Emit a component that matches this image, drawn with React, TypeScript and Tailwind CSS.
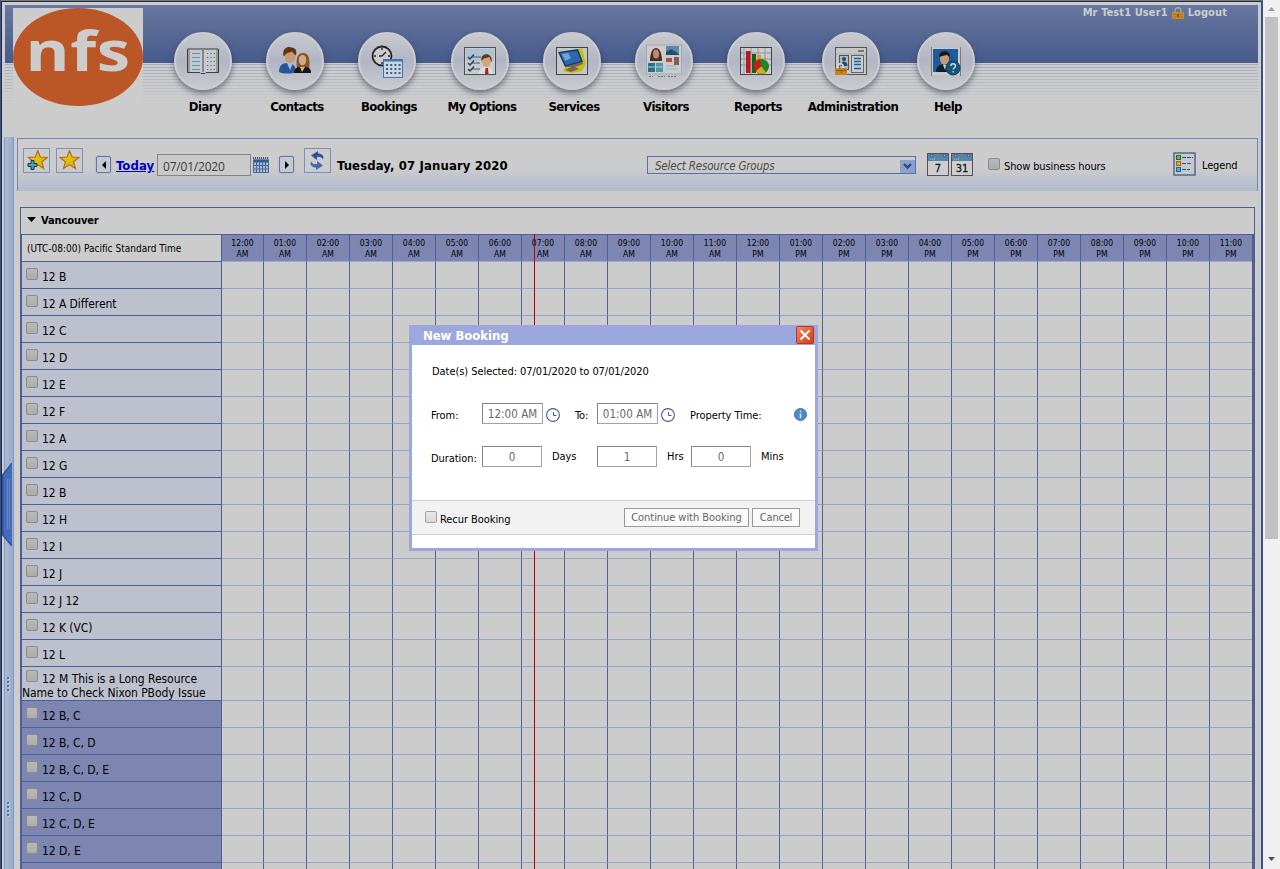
import React from "react";

const HOURS = Array.from({ length: 24 }, (_, h) => ({
  time: `${String(h % 12 === 0 ? 12 : h % 12).padStart(2, "0")}:00`,
  half: h < 12 ? "AM" : "PM",
}));

const ROOMS = ["12 B", "12 A Different", "12 C", "12 D", "12 E", "12 F", "12 A", "12 G", "12 B", "12 H", "12 I", "12 J", "12 J 12", "12 K (VC)", "12 L"];
const COMBINED = ["12 B, C", "12 B, C, D", "12 B, C, D, E", "12 C, D", "12 C, D, E", "12 D, E", ""];

function DiaryIcon() {
  return (
    <svg width="34" height="28" viewBox="0 0 34 28">
      <path d="M1.5 2h31v23.5H20l-1 1h-4l-1-1H1.500z" fill="#c6c8cb" stroke="#3d3d3d" />
      <path d="M3 3v22M31 3v22" stroke="#999" strokeWidth="2" />
      <path d="M17 3v22" stroke="#888" strokeWidth="2" />
      <path d="M6 6.500h8M6 10.500h8M6 14.500h8M6 18.500h8M6 22.500h8" stroke="#4d9bb8" strokeWidth="1" />
      <path d="M21 6.500h9M21 10.500h9M21 14.500h9M21 18.500h9M21 22.500h9" stroke="#2f7ca5" strokeWidth="1.200" strokeDasharray="1.200 2.200" />
    </svg>
  );
}
function ContactsIcon() {
  return (
    <svg width="34" height="28" viewBox="0 0 34 28">
      <path d="M1 25c0-6 3-9 8-9 6 0 9 3 9 9-4 2-13 2-17 0z" fill="#28559a" />
      <path d="M9 16l3 7 3-7z" fill="#a9bde0" />
      <ellipse cx="12" cy="9.500" rx="5.500" ry="6.500" fill="#c99a78" />
      <path d="M5.500 9C4 2 9-1 13 .5c5 0 6 4 5 8-2-1-3-3-4-4-2 1-6 1-7 4z" fill="#5f3510" />
      <path d="M19 22c-1-8-1-16 6-16s7 8 6 16z" fill="#86561a" />
      <ellipse cx="24.500" cy="13" rx="3.800" ry="5.200" fill="#d0a78a" />
      <path d="M16 26c0-4 3-6 6-6l2 3 3-3c4 0 6 2 6 6z" fill="#161616" />
      <path d="M22 20l2 5 3-5z" fill="#d3b09a" />
    </svg>
  );
}
function BookingsIcon() {
  return (
    <svg width="34" height="34" viewBox="0 0 34 34">
      <circle cx="12" cy="12" r="9.500" fill="#ccc" stroke="#222" strokeWidth="1.800" />
      <path d="M12 4v2M12 18v2M4 12h2M18 12h2M12 12l4-4M12 12h-3" stroke="#222" strokeWidth="1.300" />
      <rect x="13.500" y="15.500" width="19" height="18" fill="#cfd3d8" stroke="#3d76b3" />
      <path d="M13 16.500h20" stroke="#3d76b3" strokeWidth="2" />
      <path d="M16 21h15M16 25h15M16 29h15" stroke="#28669f" strokeWidth="2" strokeDasharray="2 2.200" />
    </svg>
  );
}
function OptionsIcon() {
  return (
    <svg width="32" height="28" viewBox="0 0 32 28">
      <rect x=".5" y=".5" width="31" height="27" fill="#c8cbcf" stroke="#505050" />
      <rect x="2" y="2" width="28" height="12" fill="#adc2d2" />
      <path d="M8 10h9M8 16h8M8 22h8" stroke="#555" />
      <path d="M4 10l2 2 4-4.500M4 16l2 2 4-4.500M4 22l2 2 4-4.500" fill="none" stroke="#1c4670" strokeWidth="1.500" />
      <path d="M15 27c0-5 3-7 7-7s7 2 7 7z" fill="#ddd" />
      <path d="M21.500 21h2.500l.5 6h-3.500z" fill="#b02020" />
      <ellipse cx="22.500" cy="14" rx="4.500" ry="6" fill="#d3a57f" />
      <path d="M17.500 14c-2-9 12-9 10 1-1-1-1-3-2-5-2 1-5 0-8 4z" fill="#653719" />
    </svg>
  );
}
function ServicesIcon() {
  return (
    <svg width="32" height="28" viewBox="0 0 32 28">
      <rect x=".5" y=".5" width="31" height="27" fill="#c7c7c7" stroke="#444" />
      <path d="M22 2l4-1 4 15-4 8-10 2-9-2 3-6z" fill="#c5bd13" />
      <path d="M2 5l20-3 5 13-18 5z" fill="#153c6f" />
      <path d="M4 6l17-2 4 10-15 4z" fill="#2c67b2" />
      <path d="M6 7l6-1 3 5-6 3z" fill="#70a3d4" />
      <path d="M8 20l18-5 1 2-8 3 4 2-8 3-6-2 6-3z" fill="#756556" />
    </svg>
  );
}
function VisitorsIcon() {
  return (
    <svg width="36" height="36" viewBox="0 0 36 36">
      <rect x=".5" y="2" width="35" height="29" fill="#c5cdd0" stroke="#aaa" />
      <rect x="2" y="3" width="16" height="16" fill="#d4c9c2" />
      <path d="M4 18c0-4 1-13 6-13s6 9 6 13z" fill="#4a2b25" />
      <ellipse cx="10" cy="11" rx="3" ry="4.500" fill="#bd8b76" />
      <rect x="2" y="20" width="7" height="9" fill="#22718a" />
      <rect x="10" y="20" width="7" height="9" fill="#4998a6" />
      <path d="M2 24h15" stroke="#b9cccc" />
      <rect x="20" y="3" width="13" height="9" fill="#5d8aaa" />
      <path d="M20 9l5-3 8 5v1H20z" fill="#254c6b" />
      <rect x="20" y="15" width="6" height="4" fill="#b04e42" />
      <rect x="28" y="14" width="5" height="8" fill="#8d5a53" />
      <path d="M20 23h10M20 26h12" stroke="#a4adb1" />
      <path d="M3 33.500h4M12 33.500h7M22 33.500h8" stroke="#777" strokeDasharray="2 1" />
    </svg>
  );
}
function ReportsIcon() {
  return (
    <svg width="32" height="28" viewBox="0 0 32 28">
      <rect x=".5" y=".5" width="31" height="27" fill="#ccc" stroke="#444" />
      <path d="M4 1v26M11 1v26M18 1v26M25 1v26M1 6h30M1 12h30M1 18h30" stroke="#8c97a7" />
      <rect x="6" y="4" width="4.500" height="22" fill="#bd1717" />
      <rect x="12" y="7" width="4" height="19" fill="#12631c" />
      <rect x="17" y="8" width="4" height="8" fill="#e29c16" />
      <circle cx="21.500" cy="19.500" r="7.500" fill="#1e8620" />
      <path d="M21.500 19.500L15.500 24a7.500 7.500 0 0 1 4-12z" fill="#c71b1b" />
      <path d="M21.500 19.500L26 25.500a7.500 7.500 0 0 1-10-1.500z" fill="#dfa51c" />
    </svg>
  );
}
function AdminIcon() {
  return (
    <svg width="32" height="28" viewBox="0 0 32 28">
      <rect x=".5" y=".5" width="31" height="27" fill="#c7c7c7" stroke="#555" />
      <path d="M23 4h6" stroke="#777" strokeWidth="2" />
      <path d="M1 7h30" stroke="#aaa" />
      <rect x="4.500" y="8.500" width="9" height="14" fill="#aabac7" stroke="#555" />
      <circle cx="9" cy="12" r="2" fill="#28496b" />
      <path d="M5.500 19c0-6 7-6 7 0z" fill="#28496b" />
      <rect x="16.500" y="8.500" width="12" height="17" fill="#c9cdd2" stroke="#666" />
      <path d="M19 11.500h7M19 14.500h7M19 17.500h7M19 21.500h7" stroke="#245d98" strokeWidth="1.300" />
      <path d="M3 22v-3c0-3 5-3 5 0v3" fill="none" stroke="#ddd" strokeWidth="1.500" />
      <rect x="0" y="21" width="12" height="7" fill="#cb8418" />
      <path d="M1 23.500h10M6 24v2" stroke="#8b5407" />
    </svg>
  );
}
function HelpIcon() {
  return (
    <svg width="32" height="29" viewBox="0 0 32 29">
      <rect x="1" y="1" width="30" height="27" fill="#c9c9c9" />
      <path d="M1.500 0v29M30.500 0v29" stroke="#847a72" />
      <rect x="3" y="2" width="25" height="23" fill="#1d5b9b" />
      <path d="M6 25c0-6 4-8 9-8s8 3 8 8z" fill="#121c2b" />
      <ellipse cx="14.500" cy="12" rx="4.500" ry="6" fill="#c69a76" />
      <path d="M9 10c0-7 11-8 11 0l-3-2-5 1z" fill="#1b1814" />
      <path d="M13 18l2 5 2-5z" fill="#ccc" />
      <circle cx="23" cy="21" r="7" fill="#12577e" stroke="#073e61" />
      <path d="M20.800 19c0-3 4.700-3 4.700 0 0 1.700-2.300 1.700-2.300 3.500M23.200 24v1.500" fill="none" stroke="#d0dce4" strokeWidth="1.400" />
    </svg>
  );
}

const NAV = [
  { label: "Diary", icon: <DiaryIcon />, box: "w-[92px]" },
  { label: "Contacts", icon: <ContactsIcon />, box: "w-[92px]" },
  { label: "Bookings", icon: <BookingsIcon />, box: "w-[92px]" },
  { label: "My Options", icon: <OptionsIcon />, box: "w-[94px]" },
  { label: "Services", icon: <ServicesIcon />, box: "w-[90px]" },
  { label: "Visitors", icon: <VisitorsIcon />, box: "w-[94px]" },
  { label: "Reports", icon: <ReportsIcon />, box: "w-[90px]" },
  { label: "Administration", icon: <AdminIcon />, box: "w-[100px]" },
  { label: "Help", icon: <HelpIcon />, box: "w-[90px]" },
];

function Check({ className = "" }: { className?: string }) {
  return <span className={`inline-block h-[12px] w-[12px] shrink-0 rounded-[2px] border border-[#8b8b8b] bg-linear-to-b from-[#b9b9b9] to-[#acacac] ${className}`} />;
}

function Padlock() {
  return (
    <svg width="12" height="12" viewBox="0 0 12 12" className="mx-[4px]">
      <path d="M3 6V3c0-3 6-3 6 0v3" fill="none" stroke="#9cacae" strokeWidth="1.300" />
      <rect x="0" y="5" width="12" height="7" rx="1" fill="#c98a25" />
      <path d="M1 7.500h10M1 10h10" stroke="#a96b12" strokeWidth=".7" />
      <path d="M6 7.500v2" stroke="#4b2e05" strokeWidth="1.300" />
    </svg>
  );
}

function Star({ plus }: { plus?: boolean }) {
  return (
    <span className="flex h-[25px] w-[27px] items-center justify-center border border-[#7b8fc0]">
      <svg width="23" height="21" viewBox="0 0 23 21">
        <defs>
          <linearGradient id="gold" x1="0" y1="0" x2="1" y2="1">
            <stop offset="0" stopColor="#d8b653" />
            <stop offset=".5" stopColor="#d9c409" />
            <stop offset="1" stopColor="#d39a10" />
          </linearGradient>
        </defs>
        <g transform={plus ? "translate(2.300 -0.500)" : "translate(1 -0.500)"}>
          <path d="M10.500 1l2.500 6.500 7 .5-5.500 4.500 2 6.500-6-3.700L4.500 19l2-6.500L1 8l7-.5z" fill="url(#gold)" stroke="#b9671b" strokeWidth="1.100" />
        </g>
        {plus && <path d="M6 10.500h3v3h3v3H9v3H6v-3H3v-3h3z" fill="#4b9fbd" stroke="#173948" />}
      </svg>
    </span>
  );
}

function Arrow({ left }: { left?: boolean }) {
  return (
    <span className="flex h-[17px] w-[15px] items-center justify-center rounded-[2px] border border-[#6078ad] bg-[#c6c8cf] shadow-[0_0_2px_#8fa3cc]">
      <svg width="4" height="8" viewBox="0 0 4 8">
        <path d={left ? "M4 0v8L0 4z" : "M0 0v8l4-4z"} fill="#000" />
      </svg>
    </span>
  );
}

function CalendarPage({ day }: { day: string }) {
  return (
    <span className="mr-[2px] flex h-[23px] w-[22px] flex-col border border-[#5a4f52] bg-[#cdcdcd]">
      <svg width="20" height="7" viewBox="0 0 20 7" className="shrink-0">
        <rect width="20" height="7" fill="#5585ab" />
        <circle cx="3.500" cy="1.500" r="1.300" fill="#9fb5c4" stroke="#2c4a60" strokeWidth=".8" />
        <circle cx="16.500" cy="1.500" r="1.300" fill="#9fb5c4" stroke="#2c4a60" strokeWidth=".8" />
        <path d="M2 5h5" stroke="#bcd" strokeDasharray="1 1" />
      </svg>
      <span className="pt-px text-center text-[11px] leading-[13px] text-[#101c1c] [-webkit-text-stroke:0.3px_#101c1c]">{day}</span>
    </span>
  );
}

function Header() {
  return (
    <header className="mx-[3px] mt-[3px] flex h-[132px] bg-[linear-gradient(180deg,#68779f_0px,#465a8c_58px,transparent_58px)]">
      <div className="flex w-full bg-[linear-gradient(180deg,transparent_58px,rgba(204,204,204,0)_58px,#ccc_102px),repeating-linear-gradient(180deg,transparent_0px,transparent_1px,#a3abc2_1px,#a3abc2_2px,transparent_2px,transparent_3px)] bg-[position:0_0,0_58px] bg-[size:100%_132px,100%_44px] bg-no-repeat">
        <div className="ml-[8px] mt-[3px] flex h-[98px] w-[130px] bg-[#ccc]">
          <div className="flex h-[98px] w-[130px] justify-center rounded-[50%] bg-[#bb5627]">
            <span className="scale-x-[1.22] font-['Open_Sans','Noto_Sans',sans-serif] text-[55px] font-bold leading-[84px] tracking-[0.5px] text-[#ccc]">nfs</span>
          </div>
        </div>
        <nav className="ml-[16px] mt-[27px] flex h-[90px]">
          {NAV.map((n) => (
            <div key={n.label} className={`flex flex-col items-center ${n.box}`}>
              <div className="mr-[4px] flex h-[58px] w-[58px] shrink-0 items-center justify-center rounded-full border-2 border-[#cbccd0] bg-[linear-gradient(180deg,#c8c9cc_0%,#b1b5c5_50%,#c7c8cb_95%)] shadow-[0_3px_6px_rgba(40,45,65,0.6)]">
                {n.icon}
              </div>
              <div className="mt-[9px] whitespace-nowrap text-[13px] font-bold leading-[16px] tracking-[-0.55px] text-black">{n.label}</div>
            </div>
          ))}
        </nav>
        <div className="ml-auto mr-[31px] flex h-[16px] items-center whitespace-nowrap text-[11px] font-bold tracking-[0.1px] text-[#ccc]">
          Mr Test1 User1 <Padlock /> Logout
        </div>
      </div>
    </header>
  );
}

function Toolbar() {
  return (
    <div className="mr-[3px] flex h-[53px] items-start whitespace-nowrap border border-b-0 border-[#7489bb] bg-[linear-gradient(180deg,#ccc_55%,#b1bacc)] pl-[5px] text-black">
      <div className="mt-[9px] flex gap-[6px]">
        <Star plus />
        <Star />
      </div>
      <div className="ml-[13px] mt-[17px]"><Arrow left /></div>
      <a className="ml-[5px] mt-[19px] w-[41px] text-[13px] font-bold leading-[16px] tracking-[0.1px] text-[#0000c8] underline">Today</a>
      <div className="mt-[15px] h-[22px] w-[94px] border border-[#858585] bg-[#cacaca] pl-[5px] font-['Open_Sans'] text-[12px] leading-[23px] tracking-[-0.2px] text-[#3a3a3a]">07/01/2020</div>
      <svg width="16" height="16" viewBox="0 0 16 16" className="ml-[2px] mt-[18px]">
        <rect x="0" y="1" width="16" height="14" fill="#a9b9d3" />
        <path d="M0 4h16" stroke="#315b94" strokeWidth="3" />
        <path d="M0 1h16" stroke="#555" strokeWidth="2" strokeDasharray="1 1" />
        <path d="M.5 3v12.500h15V3M3.500 5v10M6.500 5v10M9.500 5v10M12.500 5v10M0 8.500h16M0 12h16" fill="none" stroke="#466a9c" />
      </svg>
      <div className="ml-[10px] mt-[17px]"><Arrow /></div>
      <div className="ml-[10px] mt-[9px] flex h-[25px] w-[27px] items-center justify-center border border-[#7b8fc0]">
        <svg width="17" height="19" viewBox="0 0 17 19">
          <path d="M2 8.500c-1.500-3.500 1-6 5-6V0l7 4.500L8 9V6C5 5.500 3 6.500 2 8.500z" fill="#344f9d" transform="matrix(-1 0 0 1 16 0)" />
          <path d="M15 10.500c1.500 3.500-1 6-5 6V19l-7-4.500L9 10v3c3 .5 5-.5 6-2.500z" fill="#4566b3" transform="matrix(-1 0 0 1 17 0)" />
        </svg>
      </div>
      <div className="ml-[6px] mt-[19px] w-[310px] text-[13px] font-bold leading-[16px] tracking-[0.12px]">Tuesday, 07 January 2020</div>
      <div className="mt-[17px] flex h-[18px] w-[269px] justify-between border border-[#5770ac] pl-[7px] text-[11.500px] italic leading-[18px] tracking-[-0.2px] text-[#4b4b4b]">
        Select Resource Groups
        <span className="mt-[3px] flex h-[13px] w-[15px] items-center justify-center bg-[#8ba0cc]">
          <svg width="9" height="7" viewBox="0 0 9 7"><path d="M1 1l3.500 3.500L8 1" fill="none" stroke="#30456f" strokeWidth="2.300" /></svg>
        </span>
      </div>
      <div className="ml-[11px] mt-[14px] flex">
        <CalendarPage day="7" />
        <CalendarPage day="31" />
      </div>
      <Check className="ml-[13px] mt-[19px]" />
      <div className="ml-[4px] mt-[20px] w-[169px] text-[11px] leading-[16px] tracking-[-0.13px]">Show business hours</div>
      <svg width="23" height="24" viewBox="0 0 23 24" className="mt-[13px]">
        <rect x="1" y="1" width="21" height="22" fill="#c5c8ce" stroke="#566983" strokeWidth="1.500" />
        <rect x="3.500" y="3.500" width="4" height="4" fill="#79a664" stroke="#306d22" />
        <rect x="3.500" y="9.500" width="4" height="4" fill="#dca43d" stroke="#a2690b" />
        <rect x="3.500" y="15.500" width="4" height="4" fill="#65a3c8" stroke="#1b6593" />
        <path d="M9 5.500h11M9 11.500h10M9 17.500h8" stroke="#374b77" strokeDasharray="4 1" />
      </svg>
      <div className="ml-[6px] mt-[19px] text-[11px] leading-[16px] tracking-[-0.15px]">Legend</div>
    </div>
  );
}

function Slots({ tall }: { tall?: boolean }) {
  return (
    <div className="flex shrink-0">
      {HOURS.map((_, i) => (
        <div key={i} className={`shrink-0 border-b border-b-[#93a4c9] ${tall ? "h-[34px]" : "h-[27px]"} ${i === 0 || i === 23 ? "w-[42px]" : "w-[43px]"} ${i === 23 ? "" : "border-r border-r-[#4f6498]"}`} />
      ))}
    </div>
  );
}

function Row({ name, dark }: { name: string; dark?: boolean }) {
  return (
    <div className="flex">
      <div className={`flex h-[27px] w-[200px] shrink-0 border-b border-r border-[#4c6096] pl-[4px] text-black ${dark ? "bg-[#7d85b1]" : "bg-[#bdc1ce]"}`}>
        <Check className="mt-[6px]" />
        <span className="ml-[4px] mt-[6px] whitespace-nowrap text-[12px] leading-[18px] tracking-[-0.07px]">{name}</span>
      </div>
      <Slots />
    </div>
  );
}

function Grid() {
  return (
    <section className="ml-[3px] mt-[16px] w-[1235px] border border-[#4c6096]">
      <div className="flex h-[26px] items-center bg-[#ccc] pl-[6px] text-[11px] font-bold tracking-[-0.1px] text-black">
        <svg width="9" height="5" viewBox="0 0 9 5" className="mr-[5px] mb-[3px]"><path d="M0 0h9L4.500 5z" /></svg>
        Vancouver
      </div>
      <div className="relative w-[1233px] border-r-2 border-t border-l border-[#4c6096]">
        <div className="flex h-[27px]">
          <div className="flex w-[200px] shrink-0 items-center whitespace-nowrap border-b border-r border-[#4c6096] pl-[5px] pt-px text-[10px] tracking-[0.01px] text-black">(UTC-08:00) Pacific Standard Time</div>
          {HOURS.map((h, i) => (
            <div key={i} className={`shrink-0 border-b border-b-[#a3a9c8] bg-[#7d85b1] pt-[3px] text-center text-[8.500px] leading-[11px] tracking-[0.05px] text-black ${i === 0 || i === 23 ? "w-[42px]" : "w-[43px]"} ${i === 23 ? "" : "border-r border-r-[#4c6096]"}`}>
              {h.time}
              <br />
              {h.half}
            </div>
          ))}
        </div>
        {ROOMS.map((r, i) => <Row key={i} name={r} />)}
        <div className="flex">
          <div className="h-[34px] w-[200px] shrink-0 border-b border-r border-[#4c6096] bg-[#bdc1ce] text-[12px] leading-[15px] tracking-[-0.05px] text-black">
            <div className="flex h-[19px] whitespace-nowrap pl-[4px]">
              <Check className="mt-[3px]" />
              <span className="ml-[4px] mt-[5px]">12 M This is a Long Resource</span>
            </div>
            <div className="h-[14px] whitespace-nowrap">Name to Check Nixon PBody Issue</div>
          </div>
          <Slots tall />
        </div>
        {COMBINED.map((r, i) => <Row key={i} name={r} dark />)}
        <div className="absolute bottom-0 left-[512px] top-[-1px] w-px bg-[#b30000]" />
      </div>
    </section>
  );
}

function Splitter() {
  const dots = [0, 1, 2, 3];
  return (
    <aside className="relative ml-[2px] h-[732px] w-[10px] shrink-0 border-x border-[#7f9bcc] bg-linear-to-r from-[#aabbd3] to-[#98aac8]">
      <svg width="10" height="84" viewBox="0 0 10 84" className="absolute -left-[3px] top-[326px]">
        <path d="M10 0L0 12v60l10 11z" fill="#476bb7" />
        <path d="M10 0L.7 12v60l9.300 11" fill="none" stroke="#2754ae" strokeWidth="1.500" />
        <path d="M5.500 16v50M7.500 16v50" stroke="#6284c8" />
      </svg>
      <div className="absolute left-[2px] top-[540px] flex flex-col gap-[2px]">
        {dots.map((d) => <i key={d} className="h-[2px] w-[2px] bg-[#4f75bd] shadow-[1px_1px_0_#c5ccd8]" />)}
      </div>
      <div className="absolute left-[2px] top-[665px] flex flex-col gap-[2px]">
        {dots.map((d) => <i key={d} className="h-[2px] w-[2px] bg-[#4f75bd] shadow-[1px_1px_0_#c5ccd8]" />)}
      </div>
    </aside>
  );
}

function Clock() {
  return (
    <svg width="14" height="14" viewBox="0 0 14 14" className="ml-[3px] mt-[5px] shrink-0">
      <circle cx="7" cy="7" r="6.400" fill="#fff" stroke="#465a98" strokeWidth="1.100" />
      <path d="M7.500 4v3.500h3" fill="none" stroke="#465a98" />
    </svg>
  );
}

function Field({ value, className = "" }: { value: string; className?: string }) {
  return <div className={`h-[21px] shrink-0 border border-[#a2a2a2] border-t-[#858585] border-l-[#858585] text-center text-[11.500px] leading-[21px] tracking-[0.05px] text-[#696969] ${className}`}>{value}</div>;
}

function BookingDialog() {
  return (
    <div className="absolute left-[409px] top-[325px] flex h-[226px] w-[409px] flex-col border-[3px] border-t-0 border-[#9ca7dd] bg-white text-[11px] tracking-[-0.06px] text-black">
      <div className="flex h-[20px] shrink-0 items-center justify-between bg-[#9ca7dd] pl-[11px] pr-px text-[13px] font-bold tracking-[-0.05px] text-white">
        <span className="pt-px">New Booking</span>
        <svg width="18" height="18" viewBox="0 0 18 18">
          <defs><linearGradient id="red" x1="0" y1="0" x2="1" y2="1"><stop offset="0" stopColor="#ec8a72" /><stop offset="1" stopColor="#d93a0a" /></linearGradient></defs>
          <rect x=".5" y=".5" width="17" height="17" rx="1" fill="url(#red)" stroke="#b43a20" />
          <path d="M4.500 4.500l9 9M13.500 4.500l-9 9" stroke="#fff" strokeWidth="2" />
        </svg>
      </div>
      <div className="h-[58px] whitespace-nowrap pl-[20px] pt-[19px] leading-[16px]">Date(s) Selected: 07/01/2020 to 07/01/2020</div>
      <div className="flex h-[43px] items-start whitespace-nowrap pl-[19px] leading-[23px]">
        <span className="w-[51px] pt-px">From:</span>
        <Field value="12:00 AM" className="w-[61px]" />
        <Clock />
        <span className="ml-[15px] w-[22px] pt-px">To:</span>
        <Field value="01:00 AM" className="w-[61px]" />
        <Clock />
        <span className="ml-[15px] w-[104px] shrink-0 pt-px">Property Time:</span>
        <svg width="13" height="13" viewBox="0 0 14 14" className="mt-[5px] shrink-0">
          <circle cx="7" cy="7" r="6.500" fill="#5389c5" stroke="#4071aa" />
          <path d="M7 3v1.500M7 6v5" stroke="#dfeaf6" strokeWidth="1.600" />
        </svg>
      </div>
      <div className="flex h-[54px] items-start whitespace-nowrap pl-[19px] leading-[21px]">
        <span className="w-[51px] pt-[2px]">Duration:</span>
        <Field value="0" className="w-[60px]" />
        <span className="ml-[10px] w-[45px]">Days</span>
        <Field value="1" className="w-[60px]" />
        <span className="ml-[10px] w-[24px]">Hrs</span>
        <Field value="0" className="w-[60px]" />
        <span className="ml-[10px]">Mins</span>
      </div>
      <div className="flex h-[35px] items-start whitespace-nowrap border-y border-[#d0d0d0] bg-[#f2f2f2] pl-[13px] pr-[15px]">
        <span className="mt-[10px] h-[12px] w-[12px] rounded-[2px] border border-[#a2a2a2] bg-linear-to-b from-[#e8e8e8] to-[#d8d8d8]" />
        <span className="ml-[3px] mt-[11px] leading-[16px]">Recur Booking</span>
        <button className="ml-auto mt-[7px] h-[19px] w-[125px] border border-[#9b9b9b] bg-[#fafafa] leading-[18px] tracking-[-0.06px] text-[#666]">Continue with Booking</button>
        <button className="ml-[3px] mt-[7px] h-[19px] w-[48px] border border-[#9b9b9b] bg-[#fafafa] leading-[18px] tracking-[-0.2px] text-[#666]">Cancel</button>
      </div>
    </div>
  );
}

export default function App() {
  return (
    <div className="relative flex h-[869px] w-[1280px] overflow-hidden font-['DejaVu_Sans_Condensed','DejaVu_Sans',sans-serif]">
      <div className="h-[869px] w-[1263px] shrink-0 overflow-hidden border-l border-r-2 border-t border-[#3d5188] border-t-[#777] bg-[#ccc]">
        <div className="h-[868px] border-l border-t border-[#222b40]">
          <Header />
          <div className="flex">
            <Splitter />
            <main className="ml-[3px] mt-px min-w-0 flex-1">
              <Toolbar />
              <Grid />
            </main>
          </div>
        </div>
      </div>
      <div className="flex h-[869px] w-[17px] flex-col items-center bg-[#f0f0f0]">
        <svg width="7" height="4" viewBox="0 0 7 4" className="mt-[7px] shrink-0"><path d="M3.500 0L7 4H0z" fill="#a0a0a0" /></svg>
        <div className="mt-[6px] h-[522px] w-[13px] shrink-0 bg-[#c1c1c1]" />
        <svg width="7" height="4" viewBox="0 0 7 4" className="mb-[8px] mt-auto shrink-0"><path d="M3.500 4L7 0H0z" fill="#505050" /></svg>
      </div>
      <BookingDialog />
    </div>
  );
}
